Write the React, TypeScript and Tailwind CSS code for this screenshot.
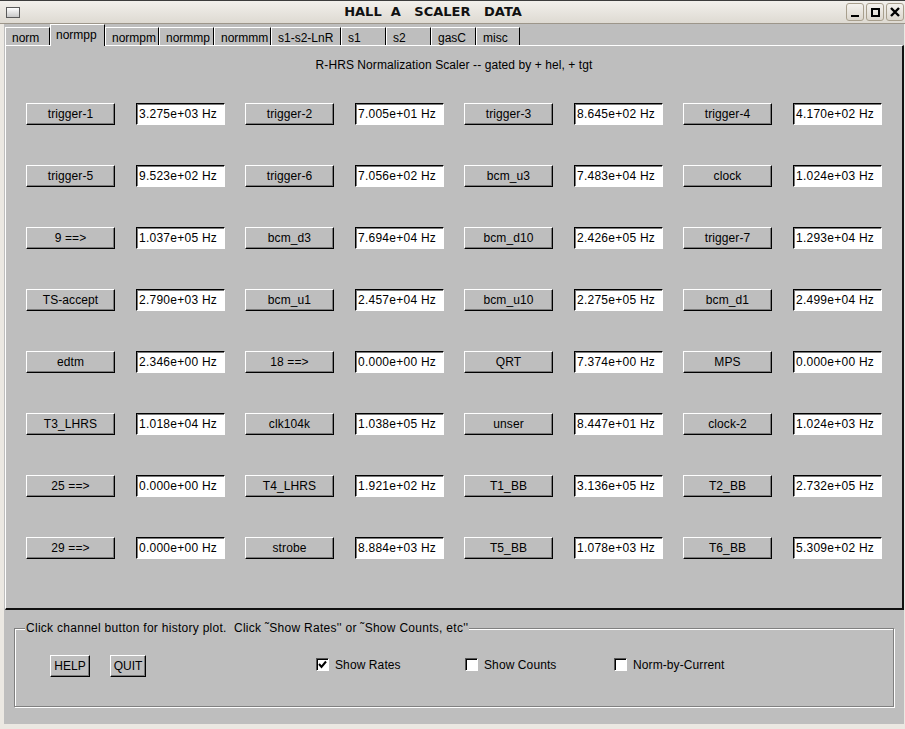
import React from "react";

const rows: [string, string][][] = [
  [["trigger-1", "3.275e+03"], ["trigger-2", "7.005e+01"], ["trigger-3", "8.645e+02"], ["trigger-4", "4.170e+02"]],
  [["trigger-5", "9.523e+02"], ["trigger-6", "7.056e+02"], ["bcm_u3", "7.483e+04"], ["clock", "1.024e+03"]],
  [["9 ==>", "1.037e+05"], ["bcm_d3", "7.694e+04"], ["bcm_d10", "2.426e+05"], ["trigger-7", "1.293e+04"]],
  [["TS-accept", "2.790e+03"], ["bcm_u1", "2.457e+04"], ["bcm_u10", "2.275e+05"], ["bcm_d1", "2.499e+04"]],
  [["edtm", "2.346e+00"], ["18 ==>", "0.000e+00"], ["QRT", "7.374e+00"], ["MPS", "0.000e+00"]],
  [["T3_LHRS", "1.018e+04"], ["clk104k", "1.038e+05"], ["unser", "8.447e+01"], ["clock-2", "1.024e+03"]],
  [["25 ==>", "0.000e+00"], ["T4_LHRS", "1.921e+02"], ["T1_BB", "3.136e+05"], ["T2_BB", "2.732e+05"]],
  [["29 ==>", "0.000e+00"], ["strobe", "8.884e+03"], ["T5_BB", "1.078e+03"], ["T6_BB", "5.309e+02"]],
];

const tabs: { name: string; w: string; sel?: boolean }[] = [
  { name: "norm", w: "w-[45px]" },
  { name: "normpp", w: "w-[55px]", sel: true },
  { name: "normpm", w: "w-[54px]" },
  { name: "normmp", w: "w-[55px]" },
  { name: "normmm", w: "w-[57px]" },
  { name: "s1-s2-LnR", w: "w-[70px]" },
  { name: "s1", w: "w-[45px]" },
  { name: "s2", w: "w-[45px]" },
  { name: "gasC", w: "w-[45px]" },
  { name: "misc", w: "w-[44px]" },
];

function WinBtn({ children }: { children: React.ReactNode }) {
  return (
    <div className="w-[18px] h-[18px] rounded-[3px] border border-[#a89f8d] bg-gradient-to-b from-[#f4f2ee] to-[#dcd7ce] flex items-center justify-center">
      {children}
    </div>
  );
}

function Check({ checked, label }: { checked?: boolean; label: string }) {
  return (
    <div className="w-[149px] flex items-center gap-[6px]">
      <div className="w-[13px] h-[13px] bg-white border-t border-l border-[#555] border-b border-r border-b-white border-r-white shadow-[inset_1px_1px_0_#000] flex items-center justify-center">
        {checked && (
          <svg width="9" height="9" viewBox="0 0 9 9">
            <path d="M1 4 L3.5 7 L8 1.5" stroke="#000" strokeWidth="2" fill="none" />
          </svg>
        )}
      </div>
      <span className="text-[12px] leading-[14px] text-black tracking-[0.1px]">{label}</span>
    </div>
  );
}

export default function App() {
  return (
    <div className="w-[905px] h-[729px] flex flex-col bg-[#ebe8e2] font-['Liberation_Sans',Arial,sans-serif] text-black overflow-hidden">
      {/* title bar */}
      <div className="h-[24px] flex items-center border-t border-[#3c3c3c] border-b border-b-[#9d968a] bg-gradient-to-b from-[#f2f0ec] to-[#dedad2]">
        <div className="w-[20px] pl-[6px] flex items-center">
          <div className="w-[14px] h-[11px] border border-[#5a5a5a] bg-gradient-to-b from-[#ffffff] to-[#c8c8c8]" />
        </div>
        <div className="flex-1 text-center font-['DejaVu_Sans',sans-serif] font-bold text-[13px] whitespace-pre text-[#111]">
          {"HALL  A   SCALER   DATA"}
        </div>
        <div className="flex gap-[2px] pr-[1px]">
          <WinBtn>
            <div className="w-[8px] h-[2px] bg-black mt-[7px]" />
          </WinBtn>
          <WinBtn>
            <div className="w-[9px] h-[9px] border-2 border-black" />
          </WinBtn>
          <WinBtn>
            <svg width="10" height="10" viewBox="0 0 10 10">
              <path d="M1 1 L9 9 M9 1 L1 9" stroke="#000" strokeWidth="2.4" />
            </svg>
          </WinBtn>
        </div>
      </div>

      {/* body */}
      <div className="flex-1 flex flex-col pl-[4px] pr-[1px] pb-[5px]">
        <div className="flex-1 flex flex-col bg-[#bebebe]">
          {/* tabs */}
          <div className="h-[21px] flex items-end pl-[1px] text-[12px]">
            {tabs.map((t) =>
              t.sel ? (
                <div
                  key={t.name}
                  className={`${t.w} h-[22px] -mb-[1px] relative z-10 bg-[#bebebe] border-t border-l border-white border-r border-r-[#000] pl-[5px] pt-[3px] leading-[14px]`}
                >
                  {t.name}
                </div>
              ) : (
                <div
                  key={t.name}
                  className={`${t.w} h-[18px] bg-[#bebebe] border-t border-l border-white border-r border-r-[#000] pl-[6px] pt-[3px] leading-[14px]`}
                >
                  {t.name}
                </div>
              )
            )}
          </div>

          {/* panel */}
          <div className="h-[565px] ml-[1px] border-t border-l border-white border-r-2 border-b-2 border-r-[#111] border-b-[#111] flex flex-col">
            <div className="pt-[12px] text-center text-[12px] leading-[14px] tracking-[0.08px]">
              R-HRS Normalization Scaler -- gated by + hel, + tgt
            </div>
            <div className="mt-[31px] pl-[20px] flex flex-col gap-[40px]">
              {rows.map((r, i) => (
                <div key={i} className="flex gap-[20px]">
                  {r.map(([name, val]) => (
                    <div key={name} className="flex gap-[21px]">
                      <div className="w-[89px] h-[22px] border-t border-l border-white border-b border-r border-b-black border-r-black shadow-[inset_-1px_-1px_0_#7a7a7a] flex items-center justify-center text-[12px] tracking-[0.1px]">
                        {name}
                      </div>
                      <div className="w-[89px] h-[22px] bg-white border-t border-l border-black border-b border-r border-b-white border-r-white shadow-[inset_1px_1px_0_#7a7a7a] flex items-center pl-[2px] text-[12px] whitespace-pre tracking-[0.25px]">
                        {val + " Hz"}
                      </div>
                    </div>
                  ))}
                </div>
              ))}
            </div>
          </div>

          {/* bottom area */}
          <div className="flex-1 pt-[11px] px-[10px]">
            <fieldset className="h-[86px] border border-[#808080] shadow-[inset_1px_1px_0_#fff,1px_1px_0_#fff] px-[10px]">
              <legend className="text-[12px] leading-[14px] bg-[#bebebe] px-[1px] tracking-[0.28px]">
                Click channel button for history plot.&nbsp; Click ˜Show Rates'' or ˜Show Counts, etc''
              </legend>
              <div className="mt-[20px] flex items-center">
                <div className="ml-[25px] w-[40px] h-[22px] border-t border-l border-white border-b border-r border-b-black border-r-black shadow-[inset_-1px_-1px_0_#7a7a7a] flex items-center justify-center text-[12px]">
                  HELP
                </div>
                <div className="ml-[20px] w-[36px] h-[22px] border-t border-l border-white border-b border-r border-b-black border-r-black shadow-[inset_-1px_-1px_0_#7a7a7a] flex items-center justify-center text-[12px]">
                  QUIT
                </div>
                <div className="ml-[170px] flex -mt-[3px]">
                  <Check checked label="Show Rates" />
                  <Check label="Show Counts" />
                  <Check label="Norm-by-Current" />
                </div>
              </div>
            </fieldset>
          </div>
        </div>
      </div>
    </div>
  );
}
